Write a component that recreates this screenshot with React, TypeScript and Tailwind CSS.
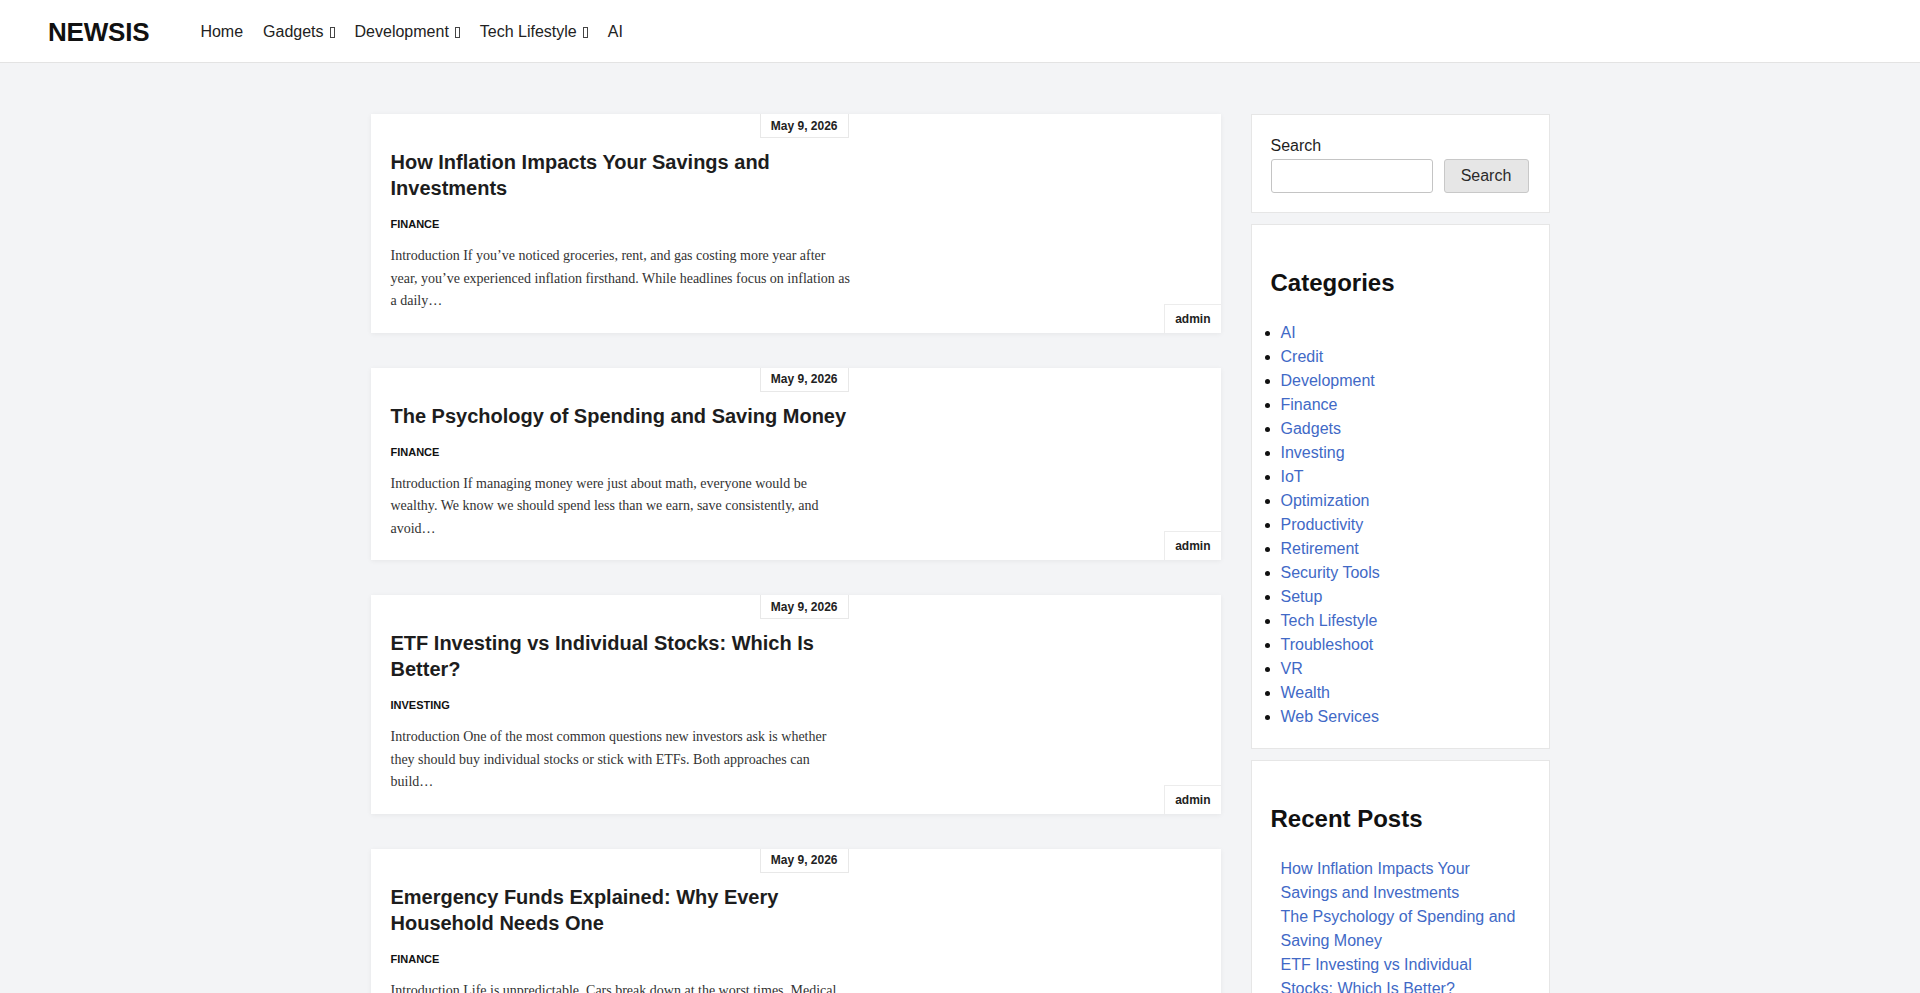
import React from 'react';

type Post = {
  title: string;
  category: string;
  excerpt: string;
  date: string;
  author: string;
};

const posts: Post[] = [
  {
    title: 'How Inflation Impacts Your Savings and Investments',
    category: 'Finance',
    excerpt:
      'Introduction If you’ve noticed groceries, rent, and gas costing more year after year, you’ve experienced inflation firsthand. While headlines focus on inflation as a daily…',
    date: 'May 9, 2026',
    author: 'admin',
  },
  {
    title: 'The Psychology of Spending and Saving Money',
    category: 'Finance',
    excerpt:
      'Introduction If managing money were just about math, everyone would be wealthy. We know we should spend less than we earn, save consistently, and avoid…',
    date: 'May 9, 2026',
    author: 'admin',
  },
  {
    title: 'ETF Investing vs Individual Stocks: Which Is Better?',
    category: 'Investing',
    excerpt:
      'Introduction One of the most common questions new investors ask is whether they should buy individual stocks or stick with ETFs. Both approaches can build…',
    date: 'May 9, 2026',
    author: 'admin',
  },
  {
    title: 'Emergency Funds Explained: Why Every Household Needs One',
    category: 'Finance',
    excerpt:
      'Introduction Life is unpredictable. Cars break down at the worst times. Medical bills show up without warning, and jobs can change overnight. An emergency…',
    date: 'May 9, 2026',
    author: 'admin',
  },
];

const categories = [
  'AI',
  'Credit',
  'Development',
  'Finance',
  'Gadgets',
  'Investing',
  'IoT',
  'Optimization',
  'Productivity',
  'Retirement',
  'Security Tools',
  'Setup',
  'Tech Lifestyle',
  'Troubleshoot',
  'VR',
  'Wealth',
  'Web Services',
];

const recent = [
  'How Inflation Impacts Your Savings and Investments',
  'The Psychology of Spending and Saving Money',
  'ETF Investing vs Individual Stocks: Which Is Better?',
  'Emergency Funds Explained: Why Every Household Needs One',
  'Building Credit From Scratch',
];

function Caret() {
  return <span className="inline-block w-[5px] h-[11px] border border-[#444] ml-[6px] align-[-1px]" />;
}

function NavItem({ label, caret }: { label: string; caret?: boolean }) {
  return (
    <a className="text-[16px] text-[#222] whitespace-nowrap">
      {label}
      {caret && <Caret />}
    </a>
  );
}

function PostCard({ post }: { post: Post }) {
  return (
    <article className="flex bg-white shadow-[0_1px_5px_rgba(0,0,0,0.06)]">
      <div className="w-[480px] pl-5 pb-5 flex flex-col">
        <div className="self-end mr-[2px] h-[24px] px-[10px] flex items-center border border-t-0 border-[#e8e8e8] text-[12px] font-bold text-[#222]">
          {post.date}
        </div>
        <h2 className="mt-[11px] text-[20px] leading-[26px] font-bold text-[#1d1d1d]">{post.title}</h2>
        <div className="mt-[15px] text-[11px] leading-[16px] font-bold uppercase text-[#111]">{post.category}</div>
        <p className="mt-[13px] font-['Liberation_Serif',serif] text-[14px] leading-[22.5px] text-[#333]">
          {post.excerpt}
        </p>
      </div>
      <div className="flex-1 flex flex-col justify-end items-end">
        <div className="h-[29px] px-[10px] flex items-center border-l border-t border-[#ececec] text-[12px] font-bold text-[#222]">
          {post.author}
        </div>
      </div>
    </article>
  );
}

function Widget({ children }: { children: React.ReactNode }) {
  return <section className="bg-white border border-[#e6e6e6] px-[19px] py-[19px]">{children}</section>;
}

export default function App() {
  return (
    <div className="min-h-screen bg-[#f3f4f6] font-['Liberation_Sans',Arial,sans-serif]">
      <header className="h-[63px] pt-[2px] bg-white border-b border-[#e3e3e3] flex items-center pl-[48px]">
        <div className="text-[26px] font-bold text-[#111] tracking-[-0.2px]">NEWSIS</div>
        <nav className="ml-[51px] flex items-center gap-[20px]">
          <NavItem label="Home" />
          <NavItem label="Gadgets" caret />
          <NavItem label="Development" caret />
          <NavItem label="Tech Lifestyle" caret />
          <NavItem label="AI" />
        </nav>
      </header>

      <main className="w-[1179px] mx-auto pt-[51px] flex items-start gap-[30px]">
        <div className="w-[850px] flex flex-col gap-[35px]">
          {posts.map((p) => (
            <PostCard key={p.title} post={p} />
          ))}
        </div>

        <aside className="w-[299px] flex flex-col gap-[11px]">
          <Widget>
            <label className="block text-[16px] leading-[24px] text-[#1e1e1e]">Search</label>
            <div className="mt-px flex gap-[11px]">
              <input className="w-[162px] h-[34px] bg-white border border-[#c4c4c4] rounded-[3px]" />
              <button className="w-[85px] h-[34px] bg-[#e6e6e6] border border-[#c8c8c8] rounded-[3px] text-[16px] text-[#2a2a2a]">
                Search
              </button>
            </div>
          </Widget>

          <Widget>
            <h2 className="mt-[24px] text-[24px] leading-[29px] font-bold text-[#111]">Categories</h2>
            <ul className="mt-[24px] pl-[10px] list-disc marker:text-[#111]">
              {categories.map((c) => (
                <li key={c} className="text-[16px] leading-[24px] text-[#4169c6]">
                  {c}
                </li>
              ))}
            </ul>
          </Widget>

          <Widget>
            <h2 className="mt-[24px] text-[24px] leading-[29px] font-bold text-[#111]">Recent Posts</h2>
            <ul className="mt-[24px] pl-[10px] pr-[12px]">
              {recent.map((r) => (
                <li key={r} className="text-[16px] leading-[24px] text-[#4169c6]">
                  {r}
                </li>
              ))}
            </ul>
          </Widget>
        </aside>
      </main>
    </div>
  );
}
